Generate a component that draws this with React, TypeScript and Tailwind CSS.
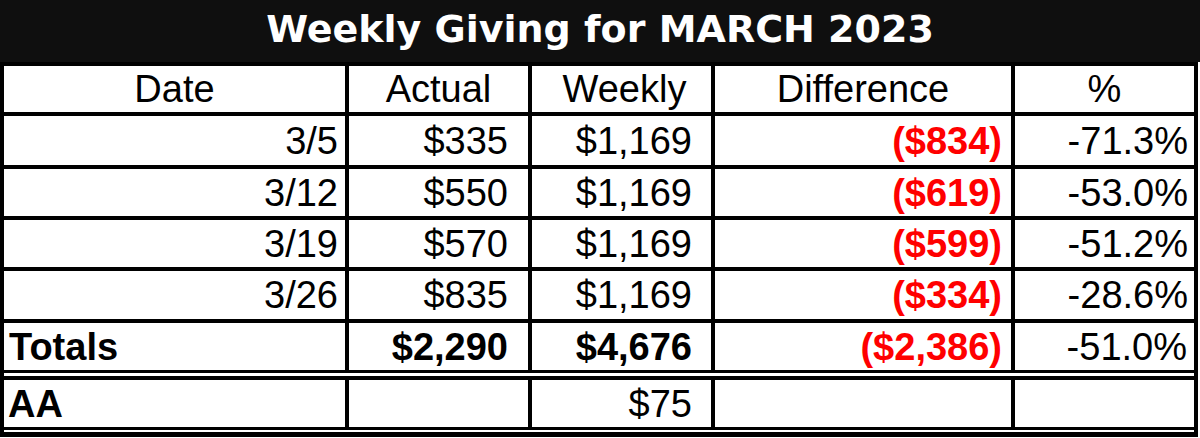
type Row = {
  date: string;
  actual: string;
  weekly: string;
  diff: string;
  pct: string;
};

const rows: Row[] = [
  { date: "3/5", actual: "$335", weekly: "$1,169", diff: "($834)", pct: "-71.3%" },
  { date: "3/12", actual: "$550", weekly: "$1,169", diff: "($619)", pct: "-53.0%" },
  { date: "3/19", actual: "$570", weekly: "$1,169", diff: "($599)", pct: "-51.2%" },
  { date: "3/26", actual: "$835", weekly: "$1,169", diff: "($334)", pct: "-28.6%" },
];

const cell = "bg-white flex items-center leading-none";

export default function App() {
  return (
    <div
      className="w-[1200px] h-[438px] bg-white text-black text-[38px] overflow-hidden"
      style={{ fontFamily: '"Liberation Sans", Arial, sans-serif' }}
    >
      {/* title bar */}
      <div className="h-[62px] w-[1200px] bg-[#0f0f0f] flex items-center justify-center pb-[5px]">
        <span
          className="text-white font-bold text-[38px] leading-none"
          style={{ fontFamily: '"DejaVu Sans", sans-serif' }}
        >
          Weekly Giving for MARCH 2023
        </span>
      </div>

      {/* main table */}
      <div className="w-[1198px] bg-black pt-[4px] px-[4px] pb-[3px] grid grid-cols-[341px_179px_179px_296px_179px] grid-rows-[46px_49px_47px_47px_48px_47px] gap-[4px]">
        <div className={`${cell} justify-center`}>Date</div>
        <div className={`${cell} justify-center`}>Actual</div>
        <div className={`${cell} justify-center pl-[6px]`}>Weekly</div>
        <div className={`${cell} justify-center`}>Difference</div>
        <div className={`${cell} justify-center`}>%</div>

        {rows.map((r) => (
          <>
            <div key={r.date + "d"} className={`${cell} justify-end pr-[7px]`}>{r.date}</div>
            <div key={r.date + "a"} className={`${cell} justify-end pr-[20px]`}>{r.actual}</div>
            <div key={r.date + "w"} className={`${cell} justify-end pr-[19px]`}>{r.weekly}</div>
            <div key={r.date + "f"} className={`${cell} justify-end pr-[9px] text-[#ff0000] font-bold`}>{r.diff}</div>
            <div key={r.date + "p"} className={`${cell} justify-end pr-[6px]`}>{r.pct}</div>
          </>
        ))}

        <div className={`${cell} pl-[5px] font-bold`}>Totals</div>
        <div className={`${cell} justify-end pr-[20px] font-bold`}>$2,290</div>
        <div className={`${cell} justify-end pr-[19px] font-bold`}>$4,676</div>
        <div className={`${cell} justify-end pr-[9px] text-[#ff0000] font-bold`}>($2,386)</div>
        <div className={`${cell} justify-end pr-[7px]`}>-51.0%</div>
      </div>

      {/* double rule */}
      <div className="w-[1198px] h-[3px] border-x-4 border-black bg-white" />

      {/* AA row */}
      <div className="w-[1198px] bg-black pt-[4px] px-[4px] pb-[3px] grid grid-cols-[341px_179px_179px_296px_179px] grid-rows-[47px] gap-[4px]">
        <div className={`${cell} pl-[4px] font-bold`}>AA</div>
        <div className={cell} />
        <div className={`${cell} justify-end pr-[19px]`}>$75</div>
        <div className={cell} />
        <div className={cell} />
      </div>

      <div className="w-[1198px] h-[2px] border-x-4 border-black bg-white" />
      <div className="w-[1198px] h-[5px] bg-black" />
    </div>
  );
}
